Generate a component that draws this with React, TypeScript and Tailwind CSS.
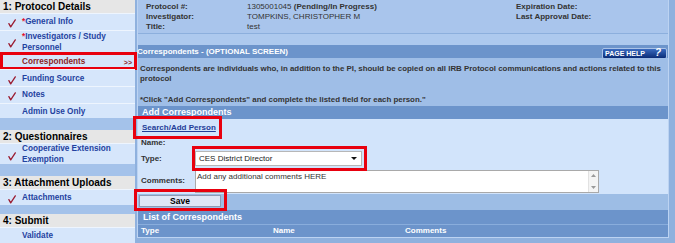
import clsx from "clsx";

function Check() {
  return (
    <svg width="8" height="9" viewBox="0 0 8 9" className="shrink-0">
      <path
        d="M0.9 4.6 L2.7 7.9 L7.3 0.9"
        fill="none"
        stroke="#9b1c31"
        strokeWidth="1.3"
        strokeLinecap="round"
        strokeLinejoin="round"
      />
    </svg>
  );
}

function RedBox({ className }: { className: string }) {
  return <span className={clsx("pointer-events-none absolute border-[3px] border-[#e8000e]", className)} />;
}

type NavProps = {
  h: string;
  check?: boolean;
  star?: boolean;
  active?: boolean;
  children: React.ReactNode;
};

function NavItem({ h, check, star, active, children }: NavProps) {
  return (
    <div className={clsx("relative flex items-center border-t border-[#eef5fe] bg-[#d6e6fb]", h)}>
      <div className="flex w-[22px] shrink-0 justify-center pl-[1px] pt-[4px]">{check && <Check />}</div>
      <div className={clsx("text-[8.2px] font-bold leading-[11px]", active ? "text-[#8c2424]" : "text-[#24429f]")}>
        {star && <span className="text-[#e4102a]">*</span>}
        {children}
      </div>
      {active && (
        <>
          <span className="absolute right-[3px] top-[4px] text-[7px] font-bold leading-[9px] text-[#8c2424]">&gt;&gt;</span>
          <RedBox className="-top-[2px] -bottom-[1px] left-0 -right-[2px]" />
        </>
      )}
    </div>
  );
}

function NavHeader({ children }: { children: React.ReactNode }) {
  return (
    <div className="h-[13px] bg-[#e6e6e6] pl-[3px] text-[10px] font-bold leading-[13px] text-black">{children}</div>
  );
}

const info = [
  ["Protocol #:", <><span>1305001045 </span><b>(Pending/In Progress)</b></>, "Expiration Date:"],
  ["Investigator:", "TOMPKINS, CHRISTOPHER M", "Last Approval Date:"],
  ["Title:", "test", ""],
] as const;

export default function App() {
  return (
    <div className="flex h-[243px] w-[675px] overflow-hidden bg-[#8fb1de] font-['Liberation_Sans',Arial,sans-serif]">
      {/* left nav */}
      <aside className="flex w-[135px] shrink-0 flex-col bg-[#a4c2ea]">
        <NavHeader>1: Protocol Details</NavHeader>
        <NavItem h="h-[17px]" check star>General Info</NavItem>
        <NavItem h="h-[23px]" check star>
          Investigators / Study
          <br />
          Personnel
        </NavItem>
        <NavItem h="h-[17px]" active>Correspondents</NavItem>
        <NavItem h="h-[17px]" check>Funding Source</NavItem>
        <NavItem h="h-[17px]" check>Notes</NavItem>
        <NavItem h="h-[16px]">Admin Use Only</NavItem>
        <div className="h-[12px]" />
        <NavHeader>2: Questionnaires</NavHeader>
        <NavItem h="h-[21px]" check>
          Cooperative Extension
          <br />
          Exemption
        </NavItem>
        <div className="h-[12px]" />
        <NavHeader>3: Attachment Uploads</NavHeader>
        <NavItem h="h-[16px]" check>Attachments</NavItem>
        <div className="h-[10px]" />
        <NavHeader>4: Submit</NavHeader>
        <NavItem h="h-[16px]">Validate</NavItem>
      </aside>

      {/* main panel */}
      <main className="ml-[2px] flex h-[238px] w-[532px] shrink-0 flex-col border-x border-b border-[#bcd3f2] text-[#333]">
        <div className="h-[33px] bg-[#a9c5ec] pl-[8px] pt-[2px]">
          {info.map(([label, value, right], i) => (
            <div key={i} className="flex text-[8px] leading-[10px]">
              <div className="w-[101px] font-bold">{label}</div>
              <div className="w-[269px]">{value}</div>
              <div className="font-bold">{right}</div>
            </div>
          ))}
        </div>
        <div className="h-[12px] border-t border-[#8cafdd] bg-[#adc9ee]" />

        <div className="flex h-[13px] items-center justify-between bg-[#6c94cb] pr-[1px]">
          <span className="-ml-px text-[8px] font-bold text-white">Correspondents - (OPTIONAL SCREEN)</span>
          <div className="mt-[3px] flex h-[11px] w-[65px] items-center justify-between rounded-[2px] border border-[#aac3e8] bg-gradient-to-b from-[#3a6bc0] to-[#0b2c77] px-[2px]">
            <span className="text-[7px] font-bold leading-none text-white">PAGE HELP</span>
            <span className="pr-[3px] text-[10px] font-black italic leading-none text-white">?</span>
          </div>
        </div>

        <div className="h-[48px] bg-[#9fbee7] px-[2px] pt-[6px] text-[7.9px] font-bold leading-[10px]">
          <p className="whitespace-nowrap">
            Correspondents are individuals who, in addition to the PI, should be copied on all IRB Protocol
            communications and actions related to this
          </p>
          <p>protocol</p>
          <p className="mt-[11px] whitespace-nowrap">
            *Click "Add Correspondents" and complete the listed field for each person."
          </p>
        </div>

        <div className="h-[13px] bg-[#6c94cb] pl-[4px] text-[9px] font-bold leading-[13px] text-white">
          Add Correspondents
        </div>

        <div className="h-[75px] bg-[#d2e4fb] pl-[3px] text-[8px] font-bold">
          <div className="flex h-[18px] items-center">
            <span className="relative ml-[1px]">
              <a href="#" className="text-[#1f3d98] underline">Search/Add Person</a>
              <RedBox className="-left-[9px] -right-[6px] -top-[6px] -bottom-[5px]" />
            </span>
          </div>
          <div className="flex h-[12px] items-center">Name:</div>
          <div className="flex h-[19px] items-center">
            <div className="w-[54px]">Type:</div>
            <div className="relative">
              <div className="flex h-[15px] w-[167px] items-center justify-between border border-[#b7b7b7] bg-white pl-[3px] pr-[4px] font-normal text-[#222]">
                <span>CES District Director</span>
                <svg width="6" height="3" viewBox="0 0 6 3">
                  <path d="M0 0 H6 L3 3 Z" fill="#111" />
                </svg>
              </div>
              <RedBox className="-left-[3px] -right-[5px] -top-[5px] -bottom-[5px]" />
            </div>
          </div>
          <div className="flex h-[26px] items-center">
            <div className="w-[54px]">Comments:</div>
            <div className="flex h-[23px] w-[404px] border border-[#a9a9a9] bg-white">
              <div className="flex-1 pl-[1px] pt-[1px] text-[8px] font-normal leading-[10px] text-[#333]">
                Add any additional comments HERE
              </div>
              <div className="flex w-[10px] flex-col items-center justify-between border-l border-[#e2e2e2] bg-[#f4f4f4] py-[3px]">
                <svg width="5" height="3" viewBox="0 0 5 3">
                  <path d="M0 3 L2.5 0 L5 3 Z" fill="#9a9a9a" />
                </svg>
                <svg width="5" height="3" viewBox="0 0 5 3">
                  <path d="M0 0 H5 L2.5 3 Z" fill="#9a9a9a" />
                </svg>
              </div>
            </div>
          </div>
        </div>

        <div className="h-[16px] bg-[#9dbde5] pl-[1px] pt-[1px]">
          <div className="relative w-[82px]">
            <button className="flex h-[12px] w-[82px] items-center justify-center border border-[#8e9bb5] bg-[#dfe6f6] text-[8.5px] font-bold text-black">
              Save
            </button>
            <RedBox className="-left-[5px] -right-[6px] -top-[6px] -bottom-[4px]" />
          </div>
        </div>

        <div className="h-[14px] bg-[#6c94cb] pl-[5px] text-[9px] font-bold leading-[14px] text-white">
          List of Correspondents
        </div>
        <div className="flex h-[13px] items-center border-t border-[#89addc] bg-[#6c94cb] pl-[3px] text-[8px] font-bold text-white">
          <div className="w-[132px]">Type</div>
          <div className="w-[132px]">Name</div>
          <div>Comments</div>
        </div>
      </main>
    </div>
  );
}
